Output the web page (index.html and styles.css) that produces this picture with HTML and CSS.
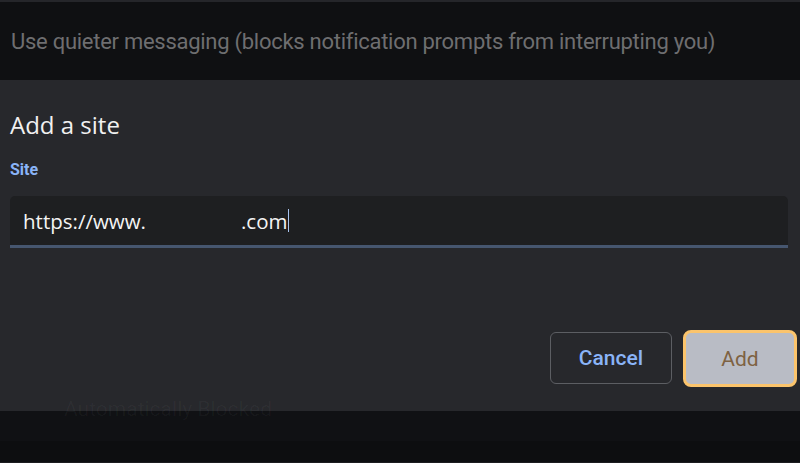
FILE: index.html
```html
<!DOCTYPE html>
<html lang="en">
<head>
    <meta charset="UTF-8">
    <title>Add a site</title>
    <link rel="stylesheet" href="styles.css">
</head>
<body>
    <div class="top-row">
        <span class="quiet-text">Use quieter messaging (blocks notification prompts from interrupting you)</span>
    </div>

    <div class="dialog">
        <h2 class="dialog-title">Add a site</h2>
        <label class="field-label" for="site-input">Site</label>
        <div class="field">
            <span class="field-text">https://www.<span class="gap"></span>.com</span><span class="caret"></span>
        </div>
        <div class="actions">
            <button class="btn btn-cancel">Cancel</button>
            <button class="btn btn-add">Add</button>
        </div>
    </div>

    <div class="below">
        <span class="ghost-text">Automatically Blocked</span>
        <div class="below-band"></div>
        <div class="below-foot"></div>
    </div>
</body>
</html>
```

FILE: styles.css
```css
body {
    margin: 0;
    width: 800px;
    height: 463px;
    overflow: hidden;
    background-color: #0e0f11;
    font-family: Roboto, "Liberation Sans", sans-serif;
}

.top-row {
    height: 78px;
    border-top: 2px solid #25262a;
    background-color: #0f1012;
    display: flex;
    align-items: center;
    padding-left: 11px;
}

.quiet-text {
    color: #6e6e70;
    font-size: 22px;
    letter-spacing: -0.27px;
    white-space: nowrap;
}

.dialog {
    position: relative;
    z-index: 1;
    height: 331px;
    background-color: #27282c;
    padding: 0 12px 0 10px;
    box-sizing: border-box;
    display: flex;
    flex-direction: column;
}

.dialog-title {
    margin: 29px 0 0 0;
    font-family: "Open Sans", Roboto, sans-serif;
    font-weight: 400;
    font-size: 24px;
    line-height: 32px;
    color: #f1f1f1;
}

.field-label {
    margin-top: 19px;
    font-family: Roboto, sans-serif;
    font-weight: 700;
    font-size: 16px;
    line-height: 20px;
    color: #8ab4f8;
}

.field {
    margin-top: 16px;
    height: 49px;
    background-color: #1e1f21;
    border-radius: 5px 5px 0 0;
    border-bottom: 3px solid #46566f;
    display: flex;
    align-items: center;
    padding-left: 13px;
}

.field-text {
    font-family: "Open Sans", Roboto, sans-serif;
    font-size: 20.5px;
    color: #f4f4f4;
}

.gap {
    display: inline-block;
    width: 95px;
}

.caret {
    width: 1px;
    height: 23px;
    margin-left: 1px;
    background-color: #a9c4f0;
}

.actions {
    margin-top: 82px;
    display: flex;
    justify-content: flex-end;
    gap: 11px;
    margin-right: -9px;
}

.btn {
    font-family: Roboto, sans-serif;
    font-size: 21px;
    font-weight: 500;
    border-radius: 6px;
    cursor: pointer;
}

.btn-cancel {
    width: 122px;
    height: 52px;
    margin-top: 2px;
    background-color: transparent;
    border: 1px solid #5c5e63;
    color: #8ab4f8;
}

.btn-add {
    width: 114px;
    height: 57px;
    background-color: #b9bcc5;
    border: 3px solid #fbc46c;
    border-radius: 8px;
    color: #7e6242;
    font-weight: 400;
}

.below {
    position: relative;
    height: 52px;
}

.ghost-text {
    position: absolute;
    z-index: 2;
    left: 64px;
    top: -14px;
    font-family: Roboto, sans-serif;
    font-size: 21px;
    color: rgba(255, 255, 255, 0.035);
    white-space: nowrap;
}

.below-band {
    height: 30px;
    background-color: #101114;
}

.below-foot {
    height: 21px;
    background-color: #0d0e10;
    border-bottom: 1px solid #1c1d20;
}
```
